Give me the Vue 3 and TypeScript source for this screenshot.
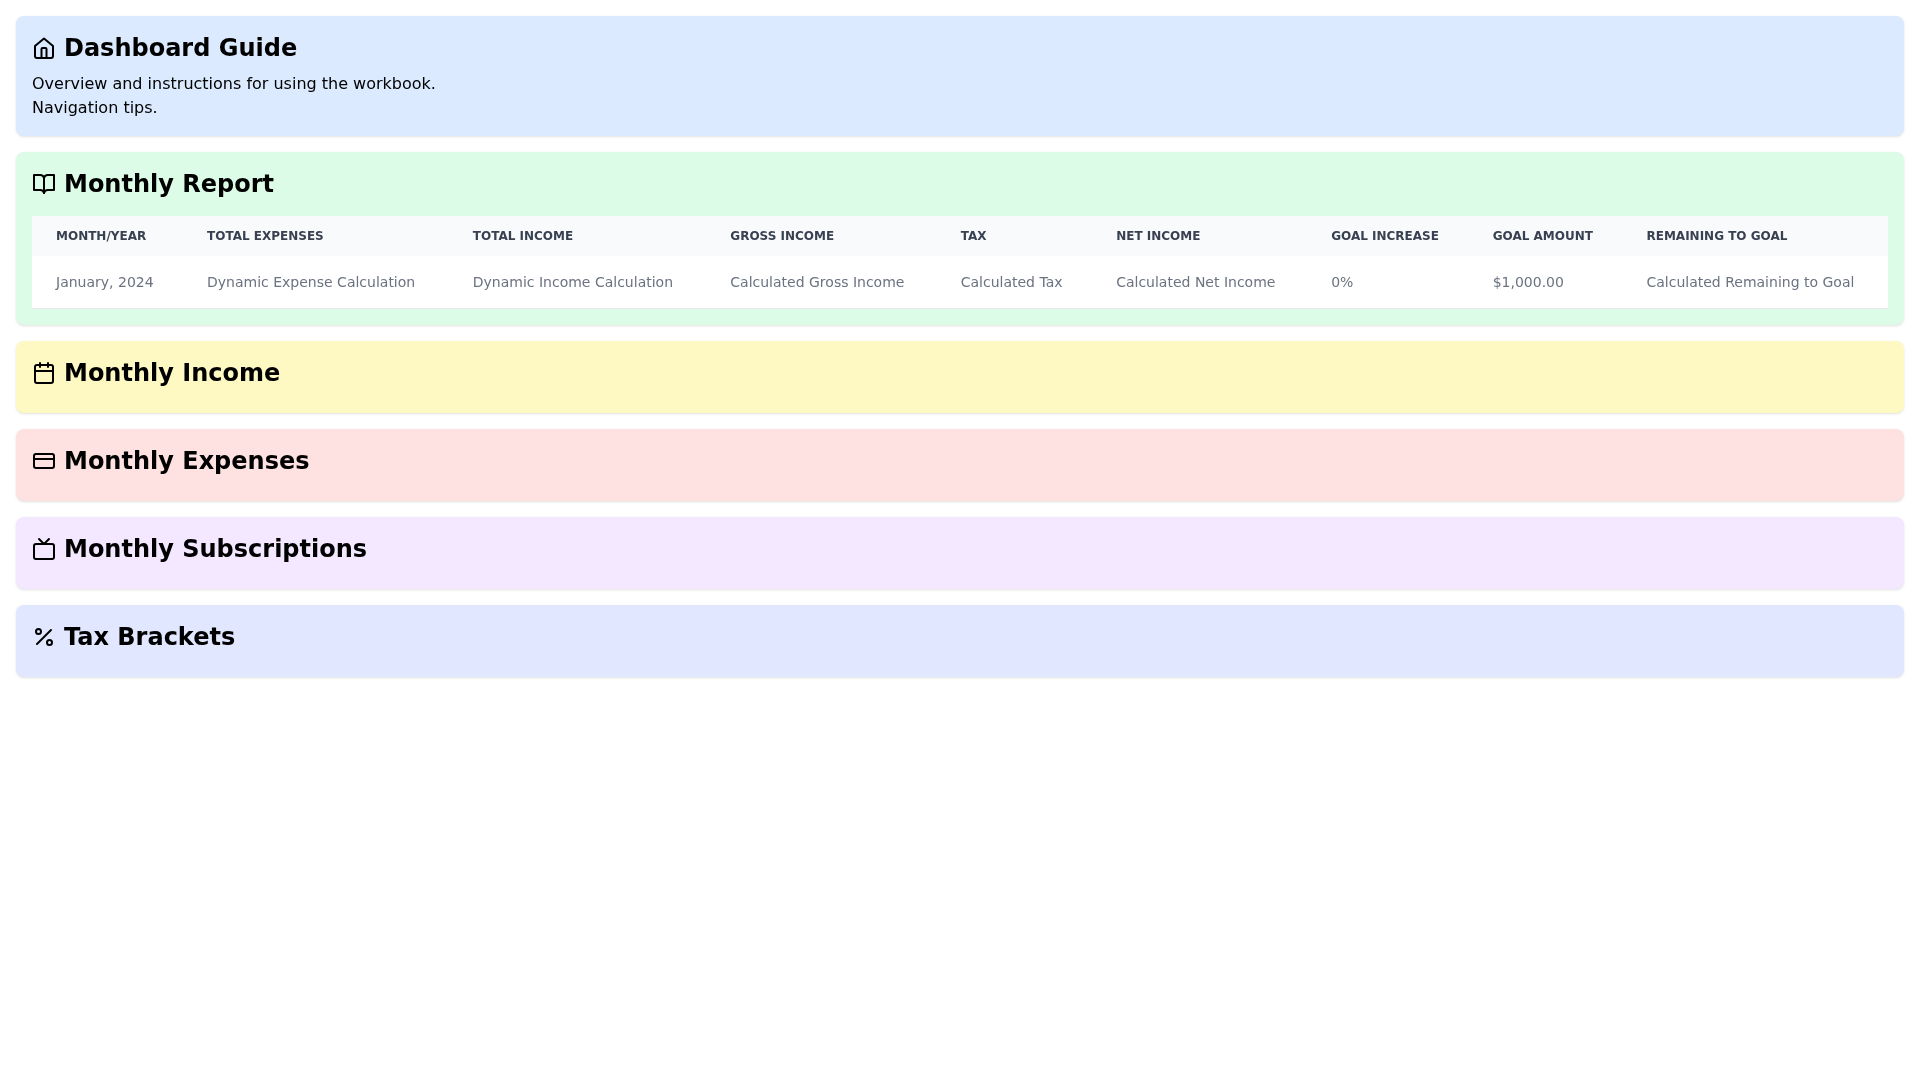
<script setup lang="ts">
interface Section {
  title: string
  tone: string
  description?: string[]
  hasTable?: boolean
}

const sections: Section[] = [
  { title: 'Dashboard Guide', tone: 'blue', description: ['Overview and instructions for using the workbook.', 'Navigation tips.'] },
  { title: 'Monthly Report', tone: 'green', hasTable: true },
  { title: 'Monthly Income', tone: 'yellow' },
  { title: 'Monthly Expenses', tone: 'red' },
  { title: 'Monthly Subscriptions', tone: 'purple' },
  { title: 'Tax Brackets', tone: 'indigo' },
]

const headers = ['Month/Year', 'Total Expenses', 'Total Income', 'Gross Income', 'Tax', 'Net Income', 'Goal Increase', 'Goal Amount', 'Remaining to Goal']
const row = ['January, 2024', 'Dynamic Expense Calculation', 'Dynamic Income Calculation', 'Calculated Gross Income', 'Calculated Tax', 'Calculated Net Income', '0%', '$1,000.00', 'Calculated Remaining to Goal']
</script>

<template>
  <main class="page">
    <section v-for="s in sections" :key="s.title" class="card" :class="s.tone">
      <h2 class="title">
        <svg class="icon" viewBox="0 0 24 24" fill="none" stroke="currentColor" stroke-width="2" stroke-linecap="round" stroke-linejoin="round">
          <template v-if="s.tone === 'blue'">
            <path d="M3 10 12 2.5l9 7.5v10a2 2 0 0 1-2 2H5a2 2 0 0 1-2-2z" />
            <path d="M9.5 22v-9a1 1 0 0 1 1-1h3a1 1 0 0 1 1 1v9" />
          </template>
          <template v-else-if="s.tone === 'green'">
            <path d="M12 6v15" />
            <path d="M2 3h6a4 4 0 0 1 4 3 4 4 0 0 1 4-3h6v15h-6a4 4 0 0 0-4 3 4 4 0 0 0-4-3H2z" />
          </template>
          <template v-else-if="s.tone === 'yellow'">
            <path d="M8 2v4" />
            <path d="M16 2v4" />
            <rect x="3" y="4" width="18" height="18" rx="2" />
            <path d="M3 10h18" />
          </template>
          <template v-else-if="s.tone === 'red'">
            <rect x="2" y="5" width="20" height="14" rx="2" />
            <line x1="2" y1="10" x2="22" y2="10" />
          </template>
          <template v-else-if="s.tone === 'purple'">
            <path d="m17 2-5 5-5-5" />
            <rect x="2" y="7" width="20" height="15" rx="2" />
          </template>
          <template v-else>
            <line x1="19" y1="5" x2="5" y2="19" />
            <circle cx="6.5" cy="6.5" r="2.5" />
            <circle cx="17.5" cy="17.5" r="2.5" />
          </template>
        </svg>
        <span>{{ s.title }}</span>
      </h2>
      <p v-for="line in s.description" :key="line" class="text">{{ line }}</p>
      <div v-if="s.hasTable" class="table-wrap">
        <table class="table">
          <thead>
            <tr>
              <th v-for="h in headers" :key="h">{{ h }}</th>
            </tr>
          </thead>
          <tbody>
            <tr>
              <td v-for="c in row" :key="c">{{ c }}</td>
            </tr>
          </tbody>
        </table>
      </div>
    </section>
  </main>
</template>

<style scoped>
.page {
  display: flex;
  flex-direction: column;
  gap: 16px;
  padding: 16px;
  font-family: "DejaVu Sans", sans-serif;
  color: #000;
}
.card {
  padding: 16px;
  border-radius: 8px;
  box-shadow: 0 1px 3px rgba(0, 0, 0, 0.1), 0 1px 2px -1px rgba(0, 0, 0, 0.1);
  will-change: transform;
}
.blue { background: #dbeafe; }
.green { background: #dcfce7; }
.yellow { background: #fef9c3; }
.red { background: #fee2e2; }
.purple { background: #f3e8ff; }
.indigo { background: #e0e7ff; }
.title {
  display: flex;
  align-items: center;
  gap: 8px;
  margin: 0 0 8px;
  font-size: 24px;
  line-height: 32px;
  font-weight: 700;
}
.icon {
  width: 24px;
  height: 24px;
  flex: none;
}
.text {
  margin: 0;
  font-size: 16px;
  line-height: 24px;
}
.table-wrap {
  margin-top: 16px;
  background: #fff;
  overflow-x: auto;
}
.table {
  width: 100%;
  border-collapse: collapse;
}
th {
  padding: 12px 24px;
  background: #f9fafb;
  color: #374151;
  font-size: 12px;
  line-height: 16px;
  font-weight: 700;
  text-align: left;
  text-transform: uppercase;
  white-space: nowrap;
}
td {
  padding: 16px 24px;
  color: #6b7280;
  font-size: 14px;
  line-height: 20px;
  white-space: nowrap;
  border-bottom: 1px solid #e5e7eb;
}
</style>
